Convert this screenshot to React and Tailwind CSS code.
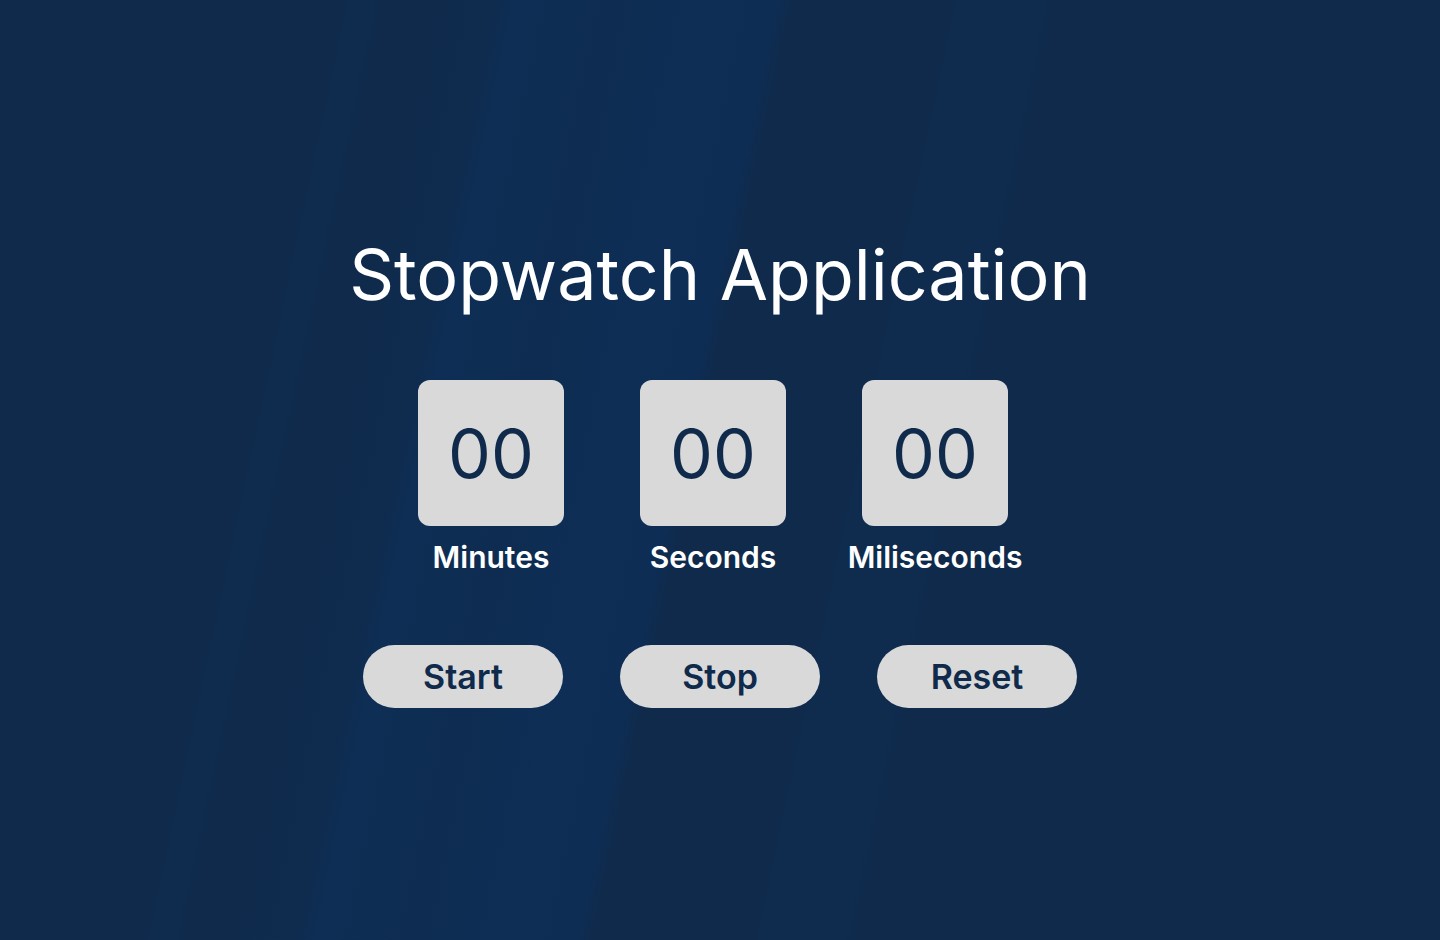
import { useEffect, useRef, useState } from "react";

const pad = (n) => String(n).padStart(2, "0");

const App = () => {
  const [elapsed, setElapsed] = useState(0); // in 10ms ticks
  const [running, setRunning] = useState(false);
  const timer = useRef(null);

  useEffect(() => {
    if (running) {
      timer.current = setInterval(() => setElapsed((t) => t + 1), 10);
    }
    return () => clearInterval(timer.current);
  }, [running]);

  const minutes = Math.floor(elapsed / 6000) % 60;
  const seconds = Math.floor(elapsed / 100) % 60;
  const millis = elapsed % 100;

  const units = [
    { label: "Minutes", value: pad(minutes) },
    { label: "Seconds", value: pad(seconds) },
    { label: "Miliseconds", value: pad(millis) },
  ];

  const buttons = [
    { label: "Start", onClick: () => setRunning(true) },
    { label: "Stop", onClick: () => setRunning(false) },
    {
      label: "Reset",
      onClick: () => {
        setRunning(false);
        setElapsed(0);
      },
    },
  ];

  return (
    <div className="min-h-screen w-full font-['Inter','Noto_Sans',sans-serif] bg-[#0f2a4b] bg-[linear-gradient(102deg,#0f2a4b_0px,#0f2a4b_335px,#0f2c4f_350px,#0f2a4b_380px,#0f2b4d_480px,#0e2e55_505px,#0e2c51_600px,#0e2e56_690px,#0e2d54_760px,#0f2a4b_775px,#0f2a4b_930px,#0f2c4f_945px,#0f2b4d_1020px,#0f2a4b_1040px)]">
      <div className="flex flex-col items-center pt-[239px]">
        {/* Title */}
        <h1 className="text-[70px] leading-[72px] font-normal text-white">
          Stopwatch Application
        </h1>

        {/* Time display */}
        <div className="flex gap-[76px] mt-[69px] pr-[14px]">
          {units.map((u) => (
            <div key={u.label} className="flex flex-col items-center w-[146px]">
              <div className="w-[146px] h-[146px] rounded-xl bg-[#d9d9d9] flex items-center justify-center">
                <span className="text-[68px] leading-[72px] font-normal text-[#0f2a4b]">
                  {u.value}
                </span>
              </div>
              <p className="mt-[16px] text-[30px] leading-[30px] font-semibold text-white whitespace-nowrap">
                {u.label}
              </p>
            </div>
          ))}
        </div>

        {/* Controls */}
        <div className="flex gap-[57px] mt-[73px]">
          {buttons.map((b) => (
            <button
              key={b.label}
              onClick={b.onClick}
              className="w-[200px] h-[63px] rounded-full bg-[#d9d9d9] flex items-center justify-center text-[34px] leading-[34px] font-semibold text-[#0f2a4b]"
            >
              {b.label}
            </button>
          ))}
        </div>
      </div>
    </div>
  );
};

export default App;
